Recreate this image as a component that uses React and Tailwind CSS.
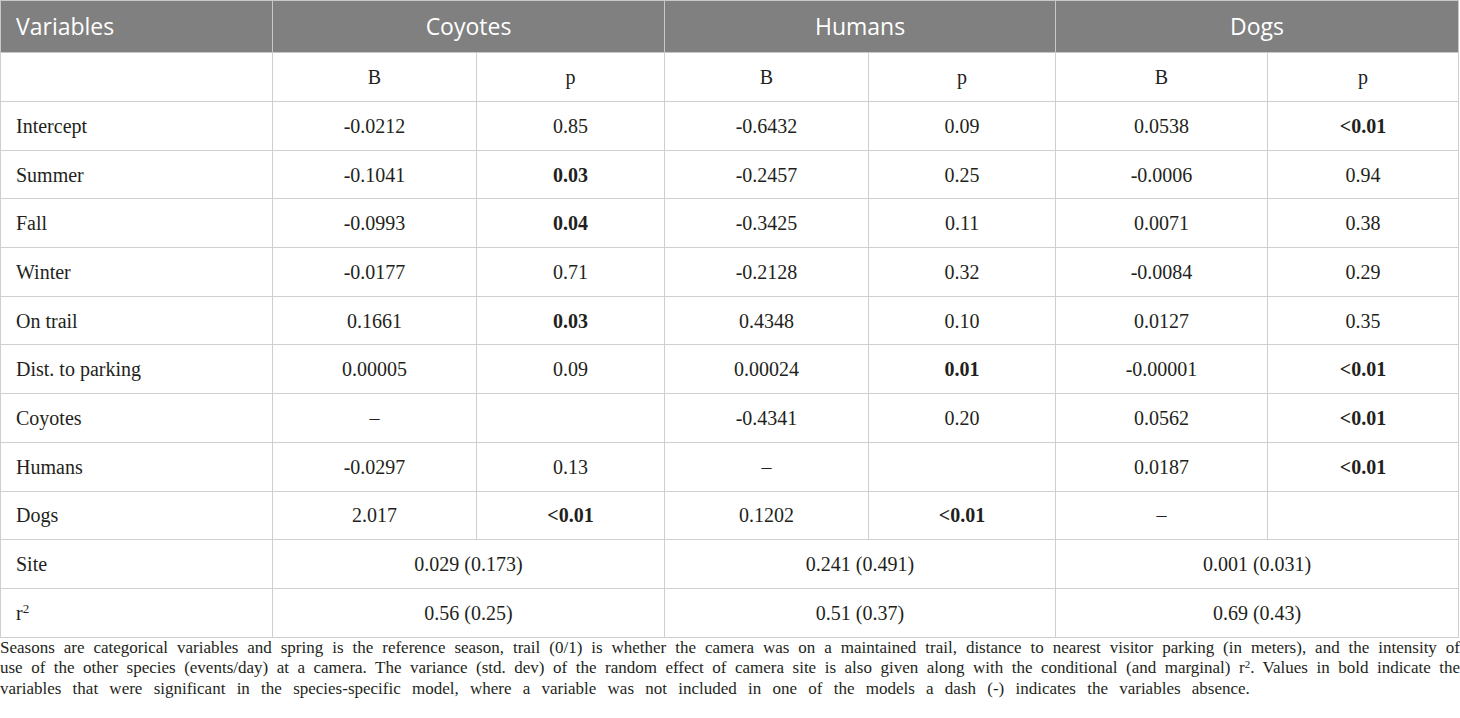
const rows = [
  ['Intercept', ['-0.0212', '0.85'], ['-0.6432', '0.09'], ['0.0538', '<0.01', 'b']],
  ['Summer', ['-0.1041', '0.03', 'b'], ['-0.2457', '0.25'], ['-0.0006', '0.94']],
  ['Fall', ['-0.0993', '0.04', 'b'], ['-0.3425', '0.11'], ['0.0071', '0.38']],
  ['Winter', ['-0.0177', '0.71'], ['-0.2128', '0.32'], ['-0.0084', '0.29']],
  ['On trail', ['0.1661', '0.03', 'b'], ['0.4348', '0.10'], ['0.0127', '0.35']],
  ['Dist. to parking', ['0.00005', '0.09'], ['0.00024', '0.01', 'b'], ['-0.00001', '<0.01', 'b']],
  ['Coyotes', ['–', ''], ['-0.4341', '0.20'], ['0.0562', '<0.01', 'b']],
  ['Humans', ['-0.0297', '0.13'], ['–', ''], ['0.0187', '<0.01', 'b']],
  ['Dogs', ['2.017', '<0.01', 'b'], ['0.1202', '<0.01', 'b'], ['–', '']],
]

const cell = 'border border-[#cfcfcf] text-center'
const first = 'border border-[#cfcfcf] pl-[15px] text-left'

export default function App() {
  return (
    <div className="w-[1460px] bg-white text-[#231f20] font-['Liberation_Serif',serif]">
      <table className="w-[1458px] table-fixed border-collapse text-[20px]">
        <colgroup>
          <col className="w-[272px]" />
          <col className="w-[204px]" />
          <col className="w-[188px]" />
          <col className="w-[204px]" />
          <col className="w-[187px]" />
          <col className="w-[212px]" />
          <col className="w-[191px]" />
        </colgroup>
        <thead>
          <tr className="h-[52px] bg-[#808080] text-white text-[23px] font-['Open_Sans',sans-serif]">
            <th className="border border-[#c8c8c8] pl-[15px] text-left font-normal">Variables</th>
            <th colSpan={2} className="border border-[#c8c8c8] text-center font-normal">Coyotes</th>
            <th colSpan={2} className="border border-[#c8c8c8] text-center font-normal">Humans</th>
            <th colSpan={2} className="border border-[#c8c8c8] text-center font-normal">Dogs</th>
          </tr>
        </thead>
        <tbody>
          <tr className="h-[49px]">
            <td className={first}></td>
            <td className={cell}>B</td>
            <td className={cell}>p</td>
            <td className={cell}>B</td>
            <td className={cell}>p</td>
            <td className={cell}>B</td>
            <td className={cell}>p</td>
          </tr>
          {rows.map(([name, ...groups]) => (
            <tr key={name} className="h-[48.7px]">
              <td className={first}>{name}</td>
              {groups.map((g, i) => [
                <td key={i + 'b'} className={cell}>{g[0]}</td>,
                <td key={i + 'p'} className={cell + (g[2] ? ' font-bold' : '')}>{g[1]}</td>,
              ])}
            </tr>
          ))}
          <tr className="h-[48.7px]">
            <td className={first}>Site</td>
            <td colSpan={2} className={cell}>0.029 (0.173)</td>
            <td colSpan={2} className={cell}>0.241 (0.491)</td>
            <td colSpan={2} className={cell}>0.001 (0.031)</td>
          </tr>
          <tr className="h-[48.7px]">
            <td className={first}>r<sup className="text-[13px]">2</sup></td>
            <td colSpan={2} className={cell}>0.56 (0.25)</td>
            <td colSpan={2} className={cell}>0.51 (0.37)</td>
            <td colSpan={2} className={cell}>0.69 (0.43)</td>
          </tr>
        </tbody>
      </table>
      {/* footnote: lines broken as in the source */}
      <div className="text-[17px] leading-[20.5px]">
        <p className="text-justify [text-align-last:justify] whitespace-nowrap">
          Seasons are categorical variables and spring is the reference season, trail (0/1) is whether the camera was on a maintained trail, distance to nearest visitor parking (in meters), and the intensity of
        </p>
        <p className="text-justify [text-align-last:justify] whitespace-nowrap">
          use of the other species (events/day) at a camera. The variance (std. dev) of the random effect of camera site is also given along with the conditional (and marginal) r<sup className="text-[11px]">2</sup>. Values in bold indicate the
        </p>
        <p className="whitespace-nowrap [word-spacing:7px]">
          variables that were significant in the species-specific model, where a variable was not included in one of the models a dash (-) indicates the variables absence.
        </p>
      </div>
    </div>
  )
}
